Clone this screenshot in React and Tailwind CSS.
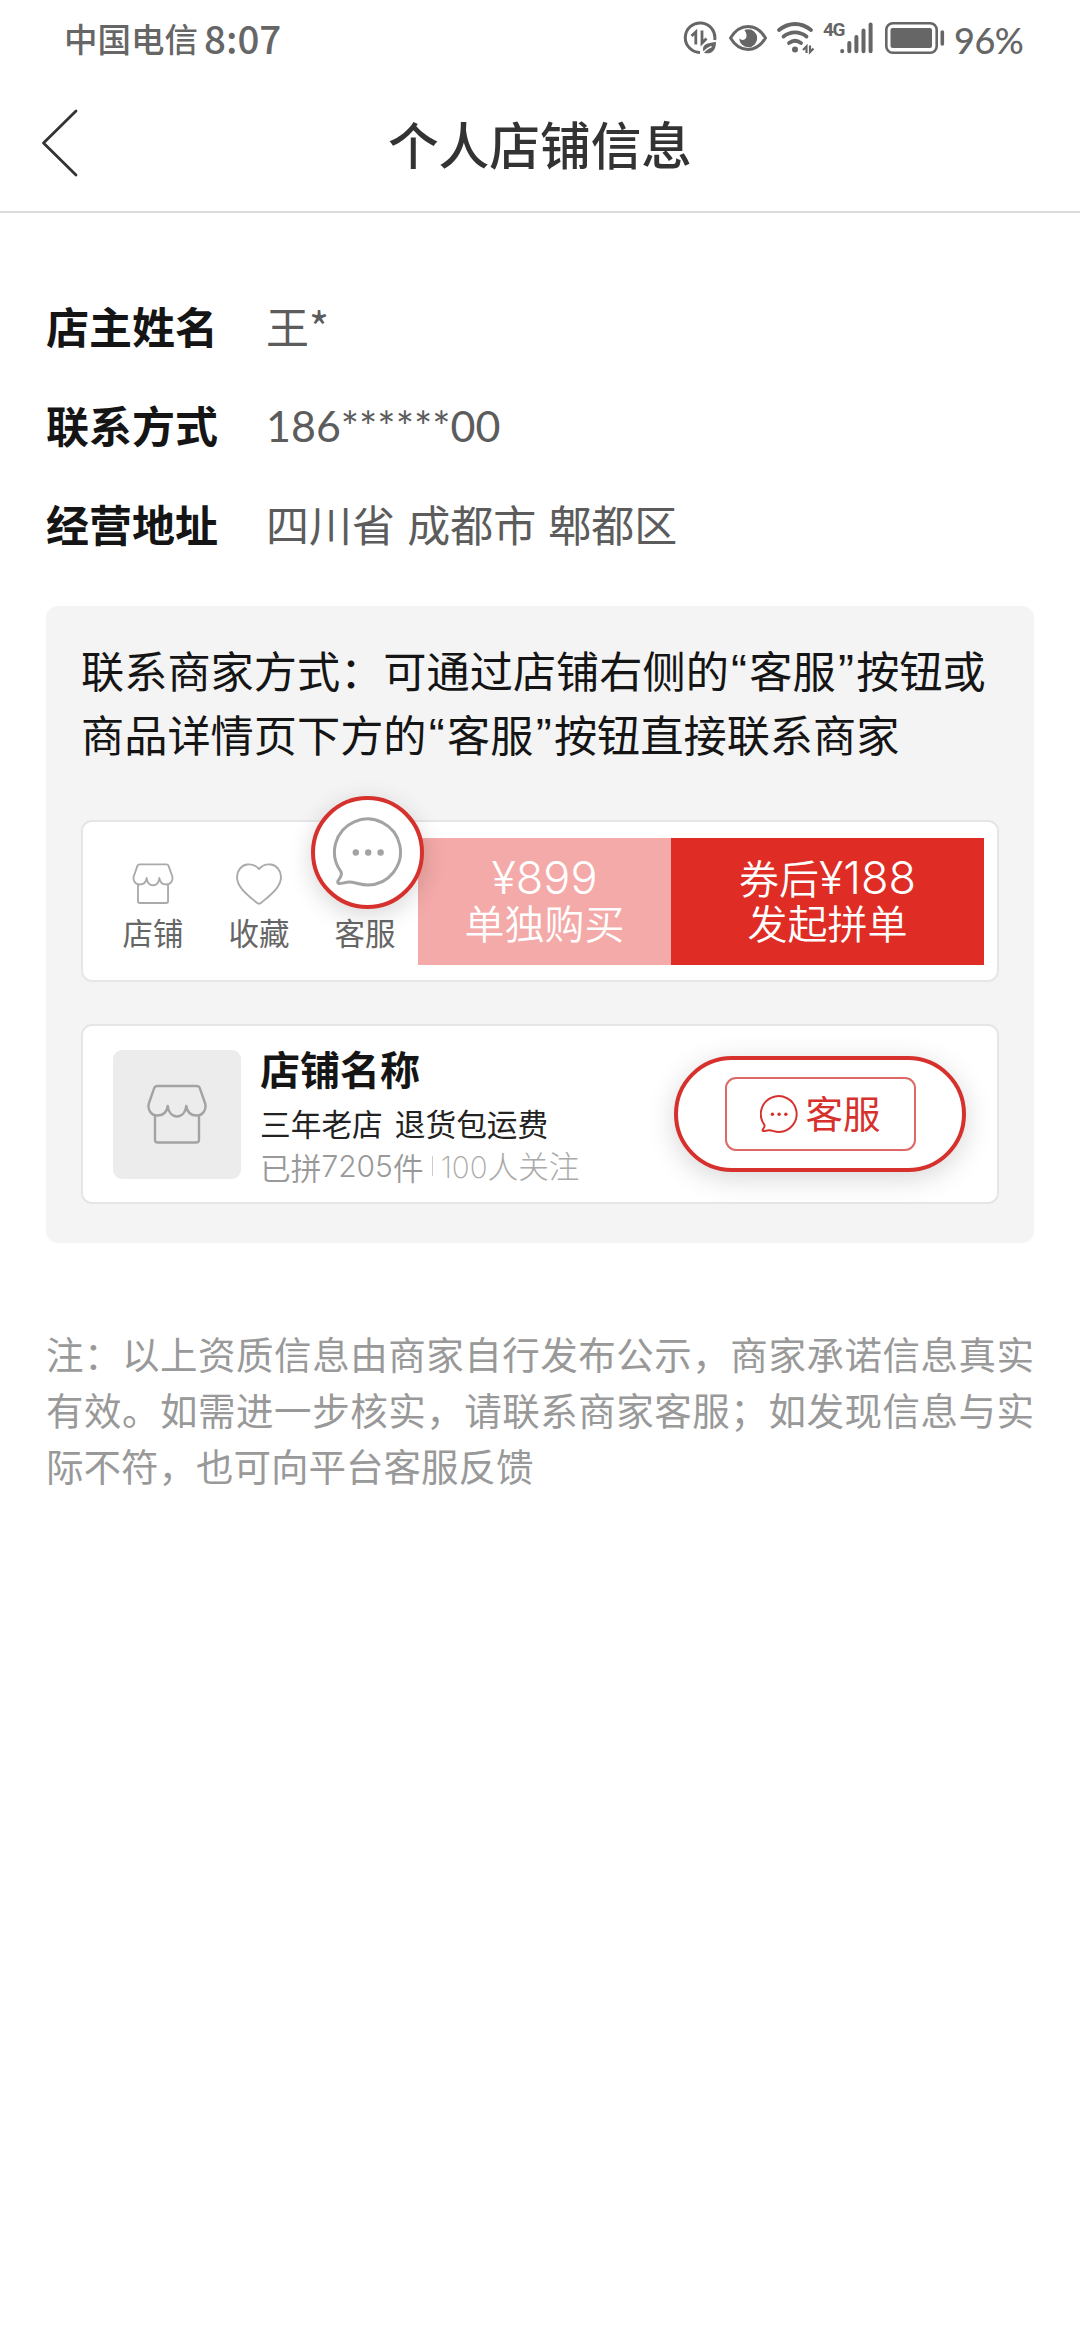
const shopInfo = [
  { label: '店主姓名', value: '王*' },
  { label: '联系方式', value: '186******00', font: "pt-[4px] font-['Lato']" },
  { label: '经营地址', value: '四川省 成都市 郫都区' },
];

const DataSaverIcon = () => (
  <svg className="w-[34px] h-[34px]" viewBox="0 0 34 34" fill="none" stroke="currentColor" strokeWidth="3">
    <path d="M17 31.5 A14.8 14.8 0 1 1 31.7 19" />
    <path d="M8.500 15 L12.800 11 V23.5" strokeWidth="2.8" />
    <path d="M19 9.5 V22 L23.5 17.5" strokeWidth="2.8" />
    <path d="M33 21 C26 22 20 22.500 20 28 C20 29.500 20.500 31 21.500 32 C28 33.500 33 30 33 21 Z" fill="currentColor" stroke="none" />
    <path d="M18.500 34 C21 30 24 27.500 28.500 25.500" stroke="#fff" strokeWidth="1.400" />
  </svg>
);

const EyeIcon = () => (
  <svg className="w-[40px] h-[28px]" viewBox="0 0 40 28" fill="none" stroke="currentColor" strokeWidth="3">
    <path d="M2.500 14 C7 6.500 13 2.500 20 2.500 C27 2.500 33 6.500 37.500 14 C33 21.500 27 25.500 20 25.500 C13 25.500 7 21.500 2.500 14 Z" strokeLinejoin="round" />
    <path d="M20 5.200 A9 9 0 1 1 11.200 14.500 C14 17 18 16 18.500 12.500 C18.800 9.500 17.500 8 16.500 6.300 A9 9 0 0 1 20 5.200 Z" fill="currentColor" stroke="none" />
  </svg>
);

const WifiIcon = () => (
  <svg className="w-[40px] h-[34px]" viewBox="0 0 40 34" fill="none" stroke="currentColor" strokeWidth="3.800" strokeLinecap="round">
    <path d="M3 9 C13 1 25 1 35 9" />
    <path d="M7.500 15.500 C14.500 10 23.500 10 30.500 15.500" />
    <path d="M13 22 C17 19 21 19 25 22" />
    <circle cx="19" cy="28.500" r="3" fill="currentColor" stroke="none" />
    <path d="M27 29 L30.500 25.500 V32 M34 24.500 V31 L37.500 27.500" strokeWidth="2.200" strokeLinecap="butt" />
  </svg>
);

const SignalIcon = () => (
  <svg className="w-[33px] h-[32px]" viewBox="0 0 33 32" fill="none" stroke="currentColor" strokeWidth="4" strokeLinecap="round">
    <path d="M2.200 29 V29.300 M9.300 21 V29.300 M16.400 15 V29.300 M23.500 8.500 V29.300 M30.600 2.500 V29.300" />
  </svg>
);

const BatteryIcon = () => (
  <svg className="w-[60px] h-[32px]" viewBox="0 0 60 32" fill="none" stroke="currentColor">
    <rect x="1.300" y="1.300" width="50.400" height="29.400" rx="6.500" strokeWidth="2.600" />
    <rect x="5.500" y="6" width="41.500" height="20" rx="2" fill="currentColor" stroke="none" />
    <path d="M57.300 10 V22" strokeWidth="3.600" strokeLinecap="round" />
  </svg>
);

const ShopIcon = ({ className, strokeWidth }) => (
  <svg className={className} viewBox="0 0 60 60" fill="none" stroke="currentColor" strokeWidth={strokeWidth} strokeLinejoin="round" strokeLinecap="round">
    <path d="M10.500 2 H49.500 Q52 2 52.800 4.200 L58 19 C60 25 56 31.500 50 31.500 C44 31.500 40 28 39.300 22 C38.500 28 35 32.500 30 32.500 C25 32.500 21.500 28 20.700 22 C20 28 16 31.500 10 31.500 C4 31.500 0 25 2 19 L7.200 4.200 Q8 2 10.500 2 Z" />
    <path d="M8 31.500 V56 Q8 58.500 10.800 58.500 H49.200 Q52 58.500 52 56 V31.500" />
  </svg>
);

const HeartIcon = () => (
  <svg className="w-[46px] h-[42px]" viewBox="0 0 46 42" fill="none" stroke="currentColor" strokeWidth="1.900" strokeLinejoin="round">
    <path d="M23 6 C19 1.500 14.500 1 11 1.500 C5 2.500 1 8 1 14 C1 24 11 31.500 20.500 39.500 Q23 41.800 25.500 39.500 C35 31.500 45 24 45 14 C45 8 41 2.500 35 1.500 C31.500 1 27 1.500 23 6 Z" />
  </svg>
);

const ChatIcon = ({ className, strokeWidth }) => (
  <svg className={className} viewBox="0 0 70 70" fill="none" stroke="currentColor" strokeWidth={strokeWidth} strokeLinejoin="round">
    <path d="M7.500 54 A33 33 0 1 1 35 68 C27 68 24 65.500 17 65 C12.500 64.800 9 67 6 66.500 C3.300 65.500 5.500 63 7 60.800 C8.500 58.500 9 56 7.500 54 Z" />
    <circle cx="22.800" cy="35.500" r="3.200" fill="currentColor" stroke="none" />
    <circle cx="35.200" cy="35.500" r="3.200" fill="currentColor" stroke="none" />
    <circle cx="47.600" cy="35.500" r="3.200" fill="currentColor" stroke="none" />
  </svg>
);

const Quote = ({ children }) => (
  <span className="inline-block w-[20.500px] text-center font-['Liberation_Sans'] text-[48px] leading-none">{children}</span>
);

const StatusBar = () => (
  <div className="flex h-[76px] items-center justify-between pl-[64px] pr-[56px] text-[#666]">
    <div className="flex items-center gap-[6px]">
      <span className="text-[33.500px] font-medium">中国电信</span>
      <span className="text-[38.500px] font-medium">8:07</span>
    </div>
    <div className="flex items-center">
      <DataSaverIcon />
      <div className="ml-[11px] flex"><EyeIcon /></div>
      <div className="ml-[8px] flex"><WifiIcon /></div>
      <span className="ml-[7px] mb-[18px] w-[17px] font-['Roboto'] text-[19px] leading-none font-bold tracking-[-1.500px]">4G</span>
      <SignalIcon />
      <div className="ml-[12px] flex"><BatteryIcon /></div>
      <span className="ml-[9px] mt-[3px] w-[70px] font-['Lato'] text-[36px] leading-none font-medium whitespace-nowrap tracking-[-0.500px]">96%</span>
    </div>
  </div>
);

const Header = () => (
  <header className="flex h-[137px] items-center border-b-2 border-[#dcdcdc] text-[#333]">
    <button type="button" className="w-[120px] pb-[2px] pl-[41px]" aria-label="返回">
      <svg className="w-[38px] h-[68px]" viewBox="0 0 38 68" fill="none" stroke="currentColor" strokeWidth="2.800" strokeLinecap="round" strokeLinejoin="round">
        <path d="M35 2 L2.500 34 L35 66" />
      </svg>
    </button>
    <h1 className="flex-1 pb-[2px] text-center text-[50.700px] leading-[60px] font-medium">个人店铺信息</h1>
    <div className="w-[120px]" />
  </header>
);

const ToolItem = ({ label, children }) => (
  <div className="flex w-[106px] flex-col items-center">
    <div className="flex h-[42px] items-center text-[#aaa]">{children}</div>
    <span className="mt-[9px] text-[30.500px] leading-[36px] text-[#666]">{label}</span>
  </div>
);

const BuyBar = () => (
  <div className="mt-[50px] flex h-[162px] items-center rounded-[11px] border-2 border-[#e6e6e6] bg-white pl-[17px] leading-[45px] text-[40px] font-[350] text-white">
    <div className="flex pt-[10px] font-normal">
      <ToolItem label="店铺">
        <ShopIcon className="w-[42px] h-[41px]" strokeWidth="2.700" />
      </ToolItem>
      <ToolItem label="收藏">
        <HeartIcon />
      </ToolItem>
      <div className="relative">
        <ToolItem label="客服" />
        <div className="absolute left-[-1px] top-[-67px] z-10 flex size-[113px] items-center justify-center rounded-full border-[4px] border-[#d6312d] bg-white text-[#a3a3a3] shadow-[0_6px_24px_rgba(0,0,0,0.16)]">
          <ChatIcon className="size-[70px]" strokeWidth="3" />
        </div>
      </div>
    </div>
    <div className="flex h-[127px] w-[253px] flex-col items-center justify-center bg-[#f3aaa8] pb-[2px]">
      <span className="font-['Inter'] text-[45px] leading-[45px]">¥899</span>
      <span>单独购买</span>
    </div>
    <div className="flex h-[127px] w-[313px] flex-col items-center justify-center bg-[#df2d25] pb-[2px]">
      <span className="flex">
        券后<span className="font-['Inter'] text-[45px]">¥188</span>
      </span>
      <span>发起拼单</span>
    </div>
  </div>
);

const ShopCard = () => (
  <div className="mt-[42px] flex h-[180px] items-center rounded-[11px] border-2 border-[#e6e6e6] bg-white pl-[30px] pr-[31px]">
    <div className="flex h-[129px] w-[128px] items-center justify-center rounded-[9px] bg-[#ececec] text-[#a3a3a3]">
      <ShopIcon className="size-[60px]" strokeWidth="2.400" />
    </div>
    <div className="ml-[19px] flex-1 pt-[4px] whitespace-nowrap">
      <p className="text-[40px] leading-[48px] font-bold text-[#151515]">店铺名称</p>
      <p className="mt-[10px] text-[30.700px] leading-[42px] text-[#222]">
        三年老店<span className="ml-[12px]">退货包运费</span>
      </p>
      <p className="flex items-center text-[30.700px] leading-[41px] font-[350] text-[#999]">
        已拼<span className="font-['Inter'] text-[30px] font-light">7205</span>件
        <span className="mx-[8px] h-[20px] w-px bg-[#ccc]" />
        <span className="font-light text-[#aaa]">
          <span className="font-['Inter'] text-[29.500px] font-extralight">100</span>人关注
        </span>
      </p>
    </div>
    <div className="flex h-[116px] w-[292px] items-center justify-center rounded-full border-[4px] border-[#d6312d] bg-white shadow-[0_6px_28px_rgba(0,0,0,0.16)]">
      <div className="flex h-[74px] w-[191px] items-center justify-center gap-[8px] rounded-[11px] border-2 border-[#dd6a68] text-[#d6312d]">
        <ChatIcon className="size-[38px]" strokeWidth="3.600" />
        <span className="pb-[5px] text-[37.500px] leading-[44px]">客服</span>
      </div>
    </div>
  </div>
);

const App = () => {
  return (
    <div className="h-[2340px] w-[1080px] overflow-hidden bg-white font-['Noto_Sans_CJK_SC',sans-serif]">
      <StatusBar />
      <Header />
      <main className="px-[46px] pt-[62px]">
        <dl>
          {shopInfo.map((item) => (
            <div key={item.label} className="flex h-[99px] items-center text-[43px] leading-[50px]">
              <dt className="w-[220px] font-bold text-[#151515]">{item.label}</dt>
              <dd className={`text-[#5c5c5c] [word-spacing:2.500px] ${item.font || ''}`}>{item.value}</dd>
            </div>
          ))}
        </dl>
        <section className="mt-[34px] h-[637px] rounded-[12px] bg-[#f4f4f4] px-[35px] pt-[31px]">
          <p className="h-[133px] whitespace-nowrap text-[43.200px] leading-[64px] text-[#151515]">
            联系商家方式：可通过店铺右侧的<Quote>“</Quote>客服<Quote>”</Quote>按钮或
            <br />
            商品详情页下方的<Quote>“</Quote>客服<Quote>”</Quote>按钮直接联系商家
          </p>
          <BuyBar />
          <ShopCard />
        </section>
        <p className="mt-[82px] text-justify text-[37.500px] leading-[56px] text-[#999]">
          注：以上资质信息由商家自行发布公示，商家承诺信息真实有效。如需进一步核实，请联系商家客服；如发现信息与实际不符，也可向平台客服反馈
        </p>
      </main>
    </div>
  );
};

export default App;
